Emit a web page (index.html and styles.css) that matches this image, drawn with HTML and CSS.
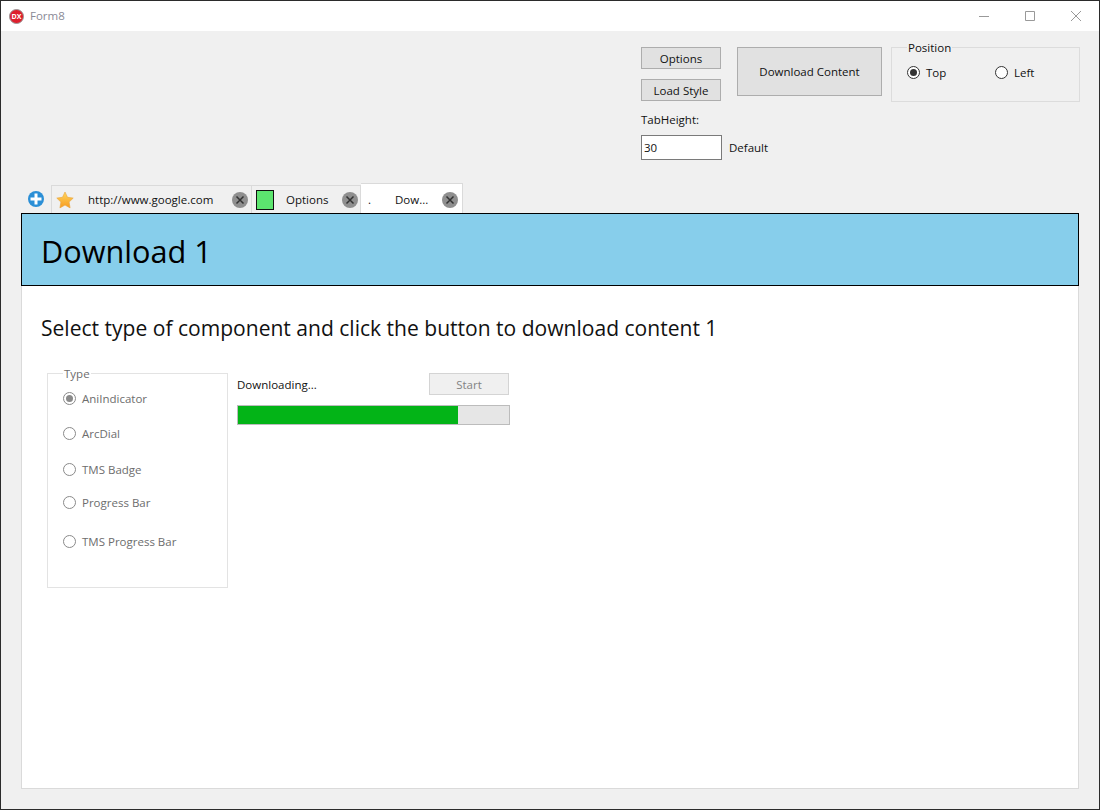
FILE: index.html
```html
<!DOCTYPE html>
<html lang="en">
<head>
    <meta charset="UTF-8">
    <meta name="viewport" content="width=device-width, initial-scale=1.0">
    <title>Form8</title>
    <link rel="stylesheet" href="styles.css">
</head>
<body>
    <div class="window">
        <div class="title-bar">
            <div class="app-logo"><span>DX</span></div>
            <span class="app-title">Form8</span>
            <div class="window-controls">
                <svg width="12" height="12" viewBox="0 0 12 12"><path d="M1 6.5h10" stroke="#999" fill="none"/></svg>
                <svg width="12" height="12" viewBox="0 0 12 12"><path d="M1.5 1.5h9v9h-9z" stroke="#999" fill="none"/></svg>
                <svg width="12" height="12" viewBox="0 0 12 12"><path d="M1 1l10 10M11 1L1 11" stroke="#999" fill="none"/></svg>
            </div>
        </div>

        <div class="toolbar">
            <div class="toolbar-left">
                <button class="btn btn-small">Options</button>
                <button class="btn btn-small">Load Style</button>
                <div class="tab-height-label">TabHeight:</div>
                <div class="tab-height-row">
                    <input class="tab-height-input" type="text" value="30">
                    <span>Default</span>
                </div>
            </div>
            <button class="btn btn-large">Download Content</button>
            <fieldset class="group position-group">
                <legend>Position</legend>
                <div class="position-options">
                    <div class="radio checked"><span class="radio-mark"></span>Top</div>
                    <div class="radio"><span class="radio-mark"></span>Left</div>
                </div>
            </fieldset>
        </div>

        <div class="tab-bar">
            <svg class="tab-add" width="18" height="18" viewBox="0 0 18 18">
                <circle cx="9" cy="9" r="8" fill="#2b8fd6"/>
                <path d="M9 3.5v11M3.5 9h11" stroke="#fff" stroke-width="3"/>
            </svg>
            <div class="tab tab-url">
                <svg class="tab-star" width="18" height="18" viewBox="0 0 18 18">
                    <defs>
                        <linearGradient id="starFill" x1="0" y1="0" x2="0" y2="1">
                            <stop offset="0" stop-color="#ffd75e"/>
                            <stop offset="1" stop-color="#f79a1f"/>
                        </linearGradient>
                    </defs>
                    <path d="M9 1l2.5 5.3 5.7.8-4.1 4 1 5.8L9 14.1l-5.1 2.8 1-5.8-4.1-4 5.7-.8z" fill="url(#starFill)" stroke="#e8a23a" stroke-width=".6"/>
                </svg>
                <span class="tab-text">http://www.google.com</span>
                <svg class="tab-close" width="16" height="16" viewBox="0 0 16 16">
                    <circle cx="8" cy="8" r="8" fill="#8f8f8f"/>
                    <path d="M4.5 4.5l7 7M11.5 4.5l-7 7" stroke="#333" stroke-width="1.5"/>
                </svg>
            </div>
            <div class="tab tab-options">
                <span class="tab-swatch"></span>
                <span class="tab-text">Options</span>
                <svg class="tab-close" width="16" height="16" viewBox="0 0 16 16">
                    <circle cx="8" cy="8" r="8" fill="#8f8f8f"/>
                    <path d="M4.5 4.5l7 7M11.5 4.5l-7 7" stroke="#333" stroke-width="1.5"/>
                </svg>
            </div>
            <div class="tab tab-active">
                <span class="tab-dot">.</span>
                <span class="tab-text">Dow...</span>
                <svg class="tab-close" width="16" height="16" viewBox="0 0 16 16">
                    <circle cx="8" cy="8" r="8" fill="#8f8f8f"/>
                    <path d="M4.5 4.5l7 7M11.5 4.5l-7 7" stroke="#333" stroke-width="1.5"/>
                </svg>
            </div>
        </div>

        <div class="panel">
            <div class="panel-header">Download 1</div>
            <div class="panel-intro">Select type of component and click the button to download content 1</div>
            <div class="panel-body">
                <fieldset class="group type-group">
                    <legend>Type</legend>
                    <div class="radio disabled checked"><span class="radio-mark"></span>AniIndicator</div>
                    <div class="radio disabled"><span class="radio-mark"></span>ArcDial</div>
                    <div class="radio disabled"><span class="radio-mark"></span>TMS Badge</div>
                    <div class="radio disabled"><span class="radio-mark"></span>Progress Bar</div>
                    <div class="radio disabled"><span class="radio-mark"></span>TMS Progress Bar</div>
                </fieldset>
                <div class="download">
                    <div class="download-top">
                        <span>Downloading...</span>
                        <button class="btn btn-disabled">Start</button>
                    </div>
                    <div class="progress"><div class="progress-fill" style="width: 81%"></div></div>
                </div>
            </div>
        </div>
    </div>
</body>
</html>
```

FILE: styles.css
```css
* {
    margin: 0;
    padding: 0;
    box-sizing: border-box;
}

body {
    font-family: "Open Sans", "Noto Sans", sans-serif;
    font-size: 11.5px;
    color: #111;
    background: #f0f0f0;
}

.window {
    width: 1100px;
    height: 810px;
    border: 1px solid #2b2b2b;
    background: #f0f0f0;
    display: flex;
    flex-direction: column;
    overflow: hidden;
}

.title-bar {
    height: 30px;
    background: #fff;
    display: flex;
    align-items: center;
    flex: none;
}

.app-logo {
    width: 15px;
    height: 15px;
    margin-left: 8px;
    border-radius: 50%;
    background: #de1f2d;
    border: 1px solid #999;
    color: #fff;
    font-size: 7px;
    font-weight: bold;
    line-height: 13px;
    text-align: center;
}

.app-title {
    margin-left: 6px;
    padding-bottom: 1px;
    color: #8a8a96;
}

.window-controls {
    margin-left: auto;
    margin-right: 17px;
    display: flex;
    gap: 34px;
}

.toolbar {
    height: 152px;
    flex: none;
    display: flex;
    justify-content: flex-end;
    align-items: flex-start;
    padding: 16px 19px 0 0;
}

.toolbar-left {
    width: 96px;
}

.btn {
    display: block;
    font-family: inherit;
    font-size: 11.5px;
    color: #111;
    background: #e1e1e1;
    border: 1px solid #adadad;
}

.btn-small {
    width: 80px;
    height: 22px;
    margin-bottom: 10px;
}

.btn-large {
    width: 145px;
    height: 49px;
    margin-right: 9px;
}

.btn-disabled {
    width: 80px;
    height: 22px;
    background: #f0f0f0;
    border-color: #d4d4d4;
    color: #838383;
}

.tab-height-label {
    margin-top: 9px;
    line-height: 18px;
}

.tab-height-row {
    display: flex;
    align-items: center;
    margin-top: 6px;
    white-space: nowrap;
}

.tab-height-input {
    width: 81px;
    height: 25px;
    flex: none;
    margin-right: 7px;
    padding-left: 2px;
    font-family: inherit;
    font-size: 11.5px;
    color: #111;
    background: #fff;
    border: 1px solid #7a7a7a;
    outline: none;
}

.group {
    border: 1px solid #dcdcdc;
}

.group legend {
    margin-left: 15px;
    padding: 2px 1px 0;
    line-height: 16px;
}

.position-group {
    width: 189px;
    height: 64px;
    margin-top: -9px;
}

.position-options {
    display: grid;
    grid-template-columns: 88px 80px;
    padding: 7px 0 0 15px;
}

.radio {
    display: flex;
    align-items: center;
    gap: 6px;
    height: 18px;
}

.radio-mark {
    position: relative;
    width: 13px;
    height: 13px;
    flex: none;
    border: 1px solid #333;
    border-radius: 50%;
    background: #fff;
}

.radio.checked .radio-mark::after {
    content: "";
    position: absolute;
    left: 2px;
    top: 2px;
    width: 7px;
    height: 7px;
    border-radius: 50%;
    background: #333;
}

.radio.disabled {
    color: #6d6d6d;
}

.radio.disabled .radio-mark {
    border-color: #8a8a8a;
}

.radio.disabled.checked .radio-mark::after {
    background: #8a8a8a;
}

.tab-bar {
    height: 30px;
    flex: none;
    display: flex;
    align-items: flex-end;
    padding-left: 26px;
}

.tab-add {
    align-self: center;
    margin-right: 6px;
    margin-top: 1px;
}

.tab {
    display: flex;
    align-items: center;
    height: 28px;
    background: #f0f0f0;
    border: 1px solid #dadada;
    border-bottom: none;
    border-left: none;
}

.tab-url {
    width: 201px;
    border-left: 1px solid #dadada;
}

.tab-options {
    width: 109px;
}

.tab-options .tab-close {
    margin-right: 2px;
}

.tab-active {
    width: 102px;
    height: 30px;
    padding-top: 2px;
    background: #fff;
}

.tab-active .tab-close {
    margin-right: 4px;
}

.tab-star {
    margin-left: 4px;
    flex: none;
}

.tab-swatch {
    width: 18px;
    height: 20px;
    margin-left: 4px;
    flex: none;
    background: #5ce56f;
    border: 1px solid #111;
}

.tab-dot {
    width: 34px;
    padding-left: 7px;
    flex: none;
}

.tab-text {
    flex: 1;
}

.tab-url .tab-text {
    padding-left: 14px;
}

.tab-options .tab-text {
    padding-left: 12px;
}

.tab-close {
    margin-right: 3px;
    flex: none;
}

.panel {
    width: 1058px;
    height: 576px;
    margin-left: 20px;
    flex: none;
    background: #fff;
    border: 1px solid #dadada;
    border-top: none;
}

.panel-header {
    height: 73px;
    margin: 0 -1px;
    padding-left: 19px;
    background: #87ceeb;
    border: 1px solid #000;
    color: #000;
    font-size: 30.7px;
    line-height: 74px;
}

.panel-intro {
    margin: 27px 0 0 19px;
    font-size: 21.05px;
    line-height: 30px;
    color: #111;
}

.panel-body {
    display: flex;
    align-items: flex-start;
    margin: 30px 0 0 25px;
}

.type-group {
    width: 181px;
    height: 224px;
    margin-top: -9px;
    padding: 7px 0 0 15px;
    border-color: #e3e3e3;
    color: #6d6d6d;
}

.type-group legend {
    margin-left: 0;
}

.type-group .radio {
    margin-bottom: 17px;
}

.type-group .radio:nth-child(3) {
    margin-bottom: 18px;
}

.type-group .radio:nth-child(4) {
    margin-bottom: 15px;
}

.type-group .radio:nth-child(5) {
    margin-bottom: 21px;
}

.download {
    width: 273px;
    margin-left: 9px;
}

.download-top {
    display: flex;
    justify-content: space-between;
    align-items: center;
    padding-right: 1px;
}

.progress {
    height: 20px;
    margin-top: 10px;
    background: #e6e6e6;
    border: 1px solid #bcbcbc;
}

.progress-fill {
    height: 100%;
    background: #03b417;
}
```
